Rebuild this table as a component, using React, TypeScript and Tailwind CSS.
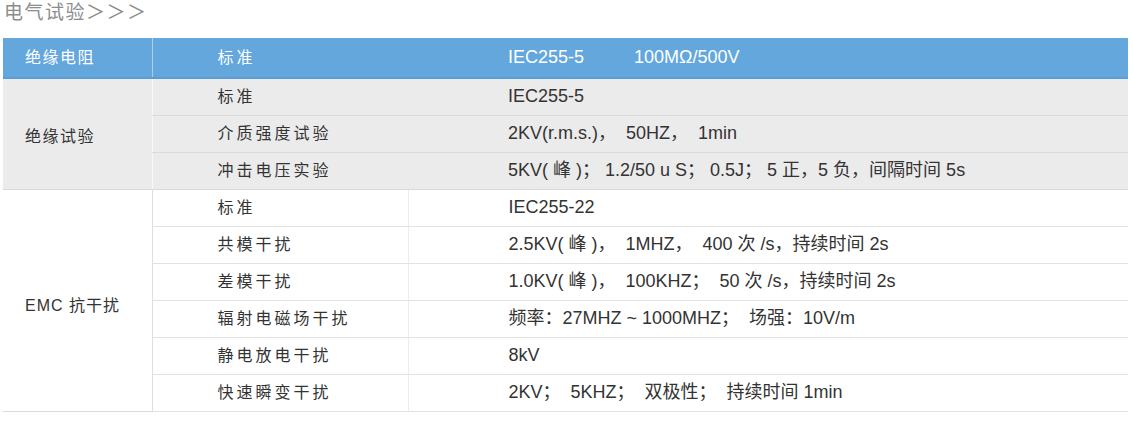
const font = { fontFamily: '"Liberation Sans", Arial, "Noto Sans CJK SC", sans-serif' }

const insulation = [
  { name: '标准', value: 'IEC255-5' },
  { name: '介质强度试验', value: '2KV(r.m.s.)，  50HZ，  1min' },
  { name: '冲击电压实验', value: '5KV( 峰 )； 1.2/50 u S； 0.5J； 5 正，5 负，间隔时间 5s' },
]

const emc = [
  { name: '标准', value: 'IEC255-22' },
  { name: '共模干扰', value: '2.5KV( 峰 )，  1MHZ，  400 次 /s，持续时间 2s' },
  { name: '差模干扰', value: '1.0KV( 峰 )，  100KHZ；  50 次 /s，持续时间 2s' },
  { name: '辐射电磁场干扰', value: '频率：27MHZ ~ 1000MHZ；  场强：10V/m' },
  { name: '静电放电干扰', value: '8kV' },
  { name: '快速瞬变干扰', value: '2KV；  5KHZ；  双极性；  持续时间 1min' },
]

export default function App() {
  return (
    <div className="w-[1133px] h-[421px] bg-white overflow-hidden" style={font}>
      {/* Title */}
      <div className="h-[38px] pl-[4px] text-[19px] leading-[26px] text-[#8c8c8c] tracking-[1.5px]">
        电气试验＞＞＞
      </div>

      <table className="ml-[3px] w-[1125px] border-collapse table-fixed">
        <colgroup>
          <col className="w-[149px]" />
          <col className="w-[256px]" />
          <col />
        </colgroup>
        <tbody>
          {/* Header */}
          <tr className="h-[40px] bg-[#63a7dd] text-white text-[16px] border-b-2 border-[#5b9dd2]">
            <td className="pl-[22px] tracking-[1.5px]">绝缘电阻</td>
            <td className="pl-[65px] tracking-[3px] border-l border-[#a9cdec]">标准</td>
            <td className="pl-[100px] text-[18px]">
              IEC255-5<span className="inline-block w-[50px]" />100MΩ/500V
            </td>
          </tr>

          {/* Insulation tests */}
          {insulation.map((row, i) => (
            <tr key={row.name} className="h-[37px] bg-[#ebebeb] text-[16px] text-[#333]">
              {i === 0 && (
                <td rowSpan={3} className="pl-[22px] pt-[6px] tracking-[1.5px] border-b border-[#dadada]">
                  绝缘试验
                </td>
              )}
              <td className="pl-[65px] tracking-[3px] border-l border-[#f8f8f8] border-b border-b-[#dadada]">
                {row.name}
              </td>
              <td className="pl-[100px] text-[18px] whitespace-pre border-b border-[#dadada]">{row.value}</td>
            </tr>
          ))}

          {/* EMC */}
          {emc.map((row, i) => (
            <tr key={row.name + i} className="h-[37px] bg-white text-[16px] text-[#333]">
              {i === 0 && (
                <td rowSpan={6} className="pl-[22px] pt-[12px] tracking-[1px] border-b border-[#dadada]">
                  EMC 抗干扰
                </td>
              )}
              <td className="pl-[65px] tracking-[3px] border-l border-[#dedede] border-b border-b-[#e2e2e2]">
                {row.name}
              </td>
              <td className="pl-[100px] text-[18px] whitespace-pre border-b border-[#e2e2e2] border-l border-l-[#ececec]">
                {row.value}
              </td>
            </tr>
          ))}
        </tbody>
      </table>
    </div>
  )
}
